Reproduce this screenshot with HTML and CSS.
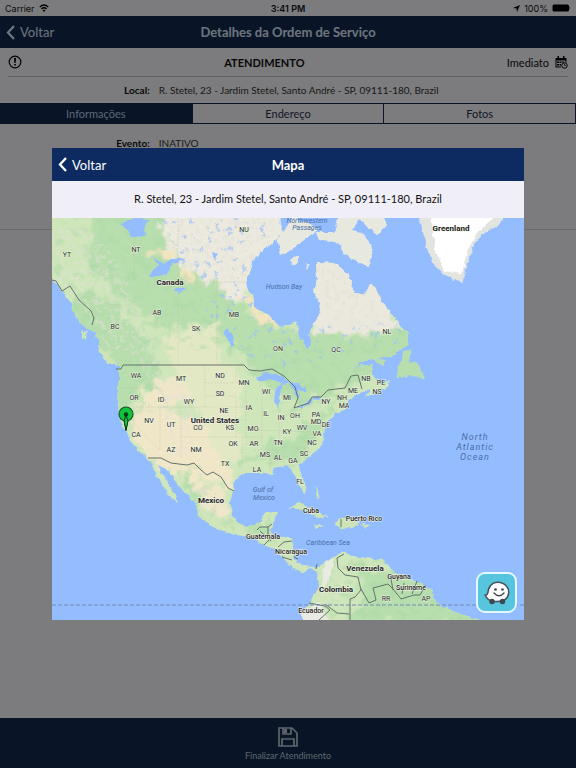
FILE: index.html
```html
<!DOCTYPE html>
<html lang="pt-BR">
<head>
<meta charset="utf-8">
<meta name="viewport" content="width=device-width, initial-scale=1">
<title>Detalhes da Ordem de Serviço</title>
<link rel="stylesheet" href="styles.css">
</head>
<body>
<div class="page">
  <div class="status">
    <span class="status-side">Carrier
      <svg width="10" height="8" viewBox="0 0 20 16" fill="none" stroke="#000" stroke-width="2.6"><path d="M1.5 6Q10-2 18.5 6M5 10Q10 5 15 10"/><path d="M7 12.500Q10 10 13 12.500L10 16Z" fill="#000" stroke="none"/></svg>
    </span>
    <span class="status-time">3:41 PM</span>
    <span class="status-side status-right">
      <svg width="7" height="7" viewBox="0 0 14 14"><path d="M14 0L8 14L7 7L0 6Z"/></svg>
      100%
      <svg width="19" height="8" viewBox="0 0 38 16"><rect x="1" y="1" width="33" height="14" rx="3"/><path d="M35 5q3 3 0 6z"/></svg>
    </span>
  </div>
  <header class="bar">
    <button class="back" type="button"><svg width="9" height="15" viewBox="0 0 9 15"><path d="M8 1L2 7.500L8 14" fill="none" stroke="currentColor" stroke-width="2.300"/></svg>Voltar</button>
    <h1>Detalhes da Ordem de Serviço</h1>
    <span></span>
  </header>
  <section class="summary">
    <div class="service">
      <svg width="14" height="14" viewBox="0 0 14 14"><circle cx="7" cy="7" r="5.800" fill="none" stroke="#000" stroke-width="1.200"/><path d="M6 3h2l-.4 5H6.400zM6.200 9h1.600v1.600H6.200z"/></svg>
      <strong>ATENDIMENTO</strong>
      <span class="when">Imediato
        <svg width="13" height="13" viewBox="0 0 26 26"><path d="M1 4h22v9h-2V9H3v12h9v2H1zM5 0h3v6H5zM16 0h3v6h-3zM4 11h4v3H4zM9 11h4v3H9zM14 11h4v2h-4zM4 16h4v3H4zM9 16h3v3H9z"/><circle cx="19" cy="19" r="5.500" fill="#f9f7fc" stroke="#000" stroke-width="2"/><path d="M19 15v4h3" fill="none" stroke="#000" stroke-width="1.500"/></svg>
      </span>
    </div>
    <dl class="field"><dt>Local:</dt><dd>R. Stetel, 23 - Jardim Stetel, Santo André - SP, 09111-180, Brazil</dd></dl>
  </section>
  <nav class="tabs">
    <button class="tab active" type="button">Informações</button>
    <button class="tab" type="button">Endereço</button>
    <button class="tab" type="button">Fotos</button>
  </nav>
  <section class="details">
    <dl class="field"><dt>Evento:</dt><dd>INATIVO</dd></dl>
  </section>
  <footer class="footer">
    <button class="finish" type="button">
      <svg width="22" height="22" viewBox="0 0 22 22" fill="none" stroke="#b9cbd8" stroke-width="1.700"><path d="M2 2H15L20 7V20H2Z"/><path d="M6 2V8H14V2M5 20V13H17V20"/><path d="M7 3h3v4H7z" fill="#b9cbd8" stroke="none"/></svg>
      Finalizar Atendimento
    </button>
  </footer>
</div>

<div class="backdrop">
  <div class="dialog" role="dialog" aria-labelledby="dialog-title">
    <header class="bar">
      <button class="back" type="button"><svg width="9" height="15" viewBox="0 0 9 15"><path d="M8 1L2 7.500L8 14" fill="none" stroke="currentColor" stroke-width="2.300"/></svg>Voltar</button>
      <h2 id="dialog-title">Mapa</h2>
      <span></span>
    </header>
    <p class="address">R. Stetel, 23 - Jardim Stetel, Santo André - SP, 09111-180, Brazil</p>
    <div class="map-area">
      <svg class="map" viewBox="52 218 472 402" role="img" aria-label="Mapa">
        <defs>
          <filter id="rough" x="-5%" y="-5%" width="110%" height="110%"><feTurbulence type="fractalNoise" baseFrequency=".16" numOctaves="3" seed="4"/><feDisplacementMap in="SourceGraphic" scale="5" xChannelSelector="R" yChannelSelector="G"/></filter>
          <filter id="ragged" x="-10%" y="-10%" width="120%" height="120%"><feTurbulence type="fractalNoise" baseFrequency=".09" numOctaves="4" seed="9"/><feDisplacementMap in="SourceGraphic" scale="22" xChannelSelector="R" yChannelSelector="G"/><feGaussianBlur stdDeviation="1.200"/></filter>
          <filter id="lakes" x="0" y="0" width="100%" height="100%"><feTurbulence type="fractalNoise" baseFrequency=".15" numOctaves="3" seed="12"/><feColorMatrix values="0 0 0 0 .32 0 0 0 0 .52 0 0 0 0 .96 14 0 0 0 -9.100"/><feComposite in2="SourceGraphic" operator="in"/></filter>
          <filter id="relief" x="0" y="0" width="100%" height="100%"><feTurbulence type="fractalNoise" baseFrequency=".2" numOctaves="4" seed="31"/><feColorMatrix values="0 0 0 0 .76 0 0 0 0 .75 0 0 0 0 .69 6 0 0 0 -3"/><feComposite in2="SourceGraphic" operator="in"/></filter>
          <filter id="forest" x="0" y="0" width="100%" height="100%"><feTurbulence type="fractalNoise" baseFrequency=".11" numOctaves="4" seed="22"/><feColorMatrix values="0 0 0 0 .38 0 0 0 0 .68 0 0 0 0 .36 0 5 0 0 -2.600"/><feComposite in2="SourceGraphic" operator="in"/></filter>
          <clipPath id="mainland"><path d="M40 205H279L282 235L265 248L252 262L245 285L252 295L254 307L265 313L282 327L297 322L299 337L307 349L311 343L309 330L319 315L321 305L314 292L317 278L316 262L334 263L349 275L354 292L364 295L372 282L384 305L401 327L409 333L407 345L391 357L364 360L351 370L361 365L372 365V376L380 384L391 380L388 387L366 397L370 388L362 392L349 400L347 408L337 413L327 423L324 433L322 445L306 460L299 466L301 473L307 490L304 493L296 480L291 468L285 466L272 468L274 474L262 473L245 473L234 480L233 490L230 503L235 520L245 527L260 523L265 512H277L272 525L270 532L279 537H292L294 557L297 562L304 566L317 567L323 563L334 557L344 552L354 557L384 560L394 572L417 582L431 590L436 603L444 608L482 621H309L304 610L309 603L319 587L317 572L311 568L304 573L293 568L282 557L274 548L259 543L252 537L235 535L212 527L199 517L195 502L180 487L167 472L157 464L162 474L174 492L179 503L170 497L159 480L149 460L134 447L127 433L120 420L117 400L119 380V365L102 350L95 333L77 320L69 300L52 280L40 270Z"/></clipPath>
        </defs>
        <rect x="52" y="218" width="472" height="402" fill="#93bdff"/>
        <g filter="url(#rough)">
          <g clip-path="url(#mainland)">
            <rect x="40" y="200" width="460" height="430" fill="#cfe6ba"/>
            <g filter="url(#ragged)">
              <path fill="#ece9de" d="M150 200H300V255L245 275L250 305L224 297L214 282L190 277L176 264L165 248L150 230Z"/>
              <path fill="#ebe8dd" d="M310 255L360 265L390 290L397 335L350 333L310 344Z"/>
              <path fill="#b8deae" d="M95 200H155L170 255L220 290L257 319L300 332L318 332L350 338L410 325L412 350L350 385L300 405L260 382L243 352L205 327L155 324L90 270Z"/>
              <path fill="#b8deae" d="M70 300L95 290L150 340L164 387L144 385L128 415H112V360L75 320Z"/>
              <path fill="#f0e7c9" d="M138 410L170 405L213 398L190 377L150 381L142 397ZM130 413L162 409L200 420L222 458L238 490L218 482L180 476L148 459L138 443ZM180 476L220 486L230 515L210 516L195 494Z"/>
              <path fill="#e2e8c4" d="M162 340L190 325H215L220 362L240 367V460L215 455L195 400L170 362Z"/>
              <path fill="#f3e4c0" d="M147 248L170 252L177 260L165 263ZM184 265L192 270L190 280L183 277ZM238 293L253 297L257 308L285 322H262Z"/>
              <path fill="#b8deae" d="M237 462L300 462L320 430L350 391L325 410L292 440L268 440L262 455ZM180 465L199 490L199 515L193 500ZM202 514L240 528L273 544L275 515L262 525L250 529L227 520ZM350 558L440 590L490 622H350L365 594Z"/>
            </g>
            <g filter="url(#forest)" opacity=".38"><path fill="#fff" d="M50 215H165L185 275L225 300L240 345L300 335L410 330L400 370L340 395L280 420L245 365L210 350H110L50 300ZM125 360H160L165 410L125 415ZM240 450L320 430L300 470ZM330 560H400L480 625H320ZM175 465H200L240 535H200Z"/></g>
            <g opacity=".5">
              <path filter="url(#relief)" fill="#fff" d="M50 228L90 230L120 265L142 320L164 372L200 405L190 455L170 455L158 390L130 350L110 350L75 300L50 280ZM314 264L350 274L393 325L330 330ZM190 480L222 500L230 525L205 518ZM325 570L345 560L345 590L318 615ZM165 215H285L245 285L190 270Z"/>
            </g>
            <g filter="url(#lakes)" opacity=".6"><path fill="#fff" d="M160 215H285V250L245 280L255 310L285 330L400 320V345L350 350L290 370L240 355L205 310Z"/></g>
            <g fill="#93bdff"><path d="M119 224L135 218L150 219L143 230L147 234L132 238L128 230ZM149 276L158 264L151 257L163 263L177 258L186 259L174 263L166 274L155 277ZM224 331L229 329L235 344L232 348ZM256 378L264 373L278 374L290 382L285 385L271 379L258 382ZM274 401L276 387L283 383L280 395L278 408ZM288 383L297 382L306 388L305 392L299 389L298 401L294 391ZM296 409L310 400L313 402L300 409ZM309 399L322 396L319 400ZM173 290L186 287L179 294ZM213 251L218 255L215 260Z"/></g>
          </g>
          <path fill="#e7e9df" d="M292 218L308 223L319 229L303 241L292 250L281 255L277 239L284 231ZM340 213H382L386 225L378 236L367 227L360 219L352 230L362 232L371 243L373 258L367 267L355 260L343 254L340 244L318 240L316 232L334 232ZM290 260L298 256V262L292 265ZM305 263L310 265L308 269Z"/>
          <path fill="#e2e5df" d="M418 213H508L498 226L486 232L475 242L469 259L465 271L463 282L455 280L444 275L433 264L427 246Z"/>
          <path fill="#fff" d="M431 213H499L485 225L475 237L467 251L462 274L444 271L435 250Z"/>
          <path fill="#b8deae" d="M396 374L404 352L411 348L409 361L420 365L425 379L413 376L397 377ZM373 358L386 360L382 365Z"/>
          <path fill="#cde5b6" d="M288 508L300 503L315 511L330 517L318 518L304 510ZM334 524L342 517L360 524L344 529ZM314 524L323 526L316 529ZM361 524L370 525L366 528ZM315 485L320 498L317 499ZM82 330L87 331L86 340L82 338ZM97 344L112 358L118 366L108 363L99 352Z"/>
          <path fill="#e8ebe2" d="M300 612L318 603L330 622H305ZM324 563L334 558L330 578L322 590Z"/>
          <path fill="#93bdff" d="M160 465L170 474L181 490L192 500L177 491L164 476Z"/>
        </g>
        <g fill="none" stroke="#b6b9a2" stroke-width=".5" stroke-dasharray="2 1" opacity=".6"><path d="M107 305H140M134 218V280M178 218V364M217 280V364M167 282H244M121 388H160L169 408M136 407H205V365M134 407V424L160 450V407M181 407V458M181 437H236V396H205M205 383H236V364M205 407H245M205 420H246M236 437H262M246 390V437M262 390V450M279 408V440M242 437V470M254 450H280M270 453V470M284 437V467M255 430L310 432M302 407V425M292 448H310"/></g>
        <g fill="none" stroke="#65736d" stroke-width="1" stroke-linejoin="round"><path d="M52 280L56 281L62 291L70 286L79 300L91 311L94 318L92 325M116 369L121 369L123 365H244L249 370L260 371L272 369L284 376L295 387L298 398L294 408L309 403L312 397L321 397L328 390L345 388L351 376L358 375L362 389M148 458H161L171 463L187 465L194 463L201 470L207 475L213 472L221 477L228 488L234 491M257 530L260 527H268L272 524M268 527V535M260 531L271 541M264 545L269 540M278 547L284 542L292 541M282 557L292 560M316 569L317 564M344 554L337 558L338 568L345 575L358 577L361 590L355 597L350 599V620M361 589L369 603L376 600L373 588L388 584L393 589L401 599L414 595L420 595L426 585M309 603L325 606L330 610L319 620M325 604L337 613L349 614M391 579L393 590M404 583L402 594M417 581L412 594M341 519V527M294 557L298 559"/></g>
        <path d="M52 605H524" stroke="#7589b5" stroke-width="1" stroke-dasharray="4 2" fill="none"/>
        <g class="region">
          <text x="244" y="232">NU</text><text x="136" y="252">NT</text><text x="67" y="257">YT</text><text x="157" y="315">AB</text><text x="234" y="317">MB</text><text x="115" y="329">BC</text><text x="196" y="331">SK</text><text x="278" y="351">ON</text><text x="336" y="352">QC</text><text x="387" y="334">NL</text>
          <text x="136" y="378">WA</text><text x="181" y="381">MT</text><text x="220" y="378">ND</text><text x="244" y="385">MN</text><text x="134" y="400">OR</text><text x="161" y="402">ID</text><text x="189" y="404">WY</text><text x="220" y="396">SD</text><text x="266" y="394">WI</text><text x="287" y="400">MI</text><text x="366" y="381">NB</text><text x="381" y="385">PE</text><text x="377" y="394">NS</text><text x="353" y="393">ME</text><text x="342" y="400">NH</text><text x="326" y="404">NY</text><text x="344" y="408">MA</text>
          <text x="149" y="423">NV</text><text x="171" y="427">UT</text><text x="224" y="413">NE</text><text x="249" y="410">IA</text><text x="266" y="416">IL</text><text x="281" y="420">IN</text><text x="295" y="418">OH</text><text x="316" y="417">PA</text><text x="316" y="424">MD</text><text x="326" y="427">DE</text><text x="302" y="430">WV</text><text x="317" y="436">VA</text><text x="136" y="437">CA</text><text x="198" y="430">CO</text><text x="230" y="430">KS</text><text x="253" y="431">MO</text><text x="287" y="434">KY</text><text x="312" y="445">NC</text><text x="278" y="445">TN</text><text x="254" y="446">AR</text><text x="233" y="446">OK</text><text x="171" y="452">AZ</text><text x="196" y="452">NM</text><text x="304" y="456">SC</text><text x="265" y="457">MS</text><text x="278" y="460">AL</text><text x="293" y="463">GA</text><text x="225" y="466">TX</text><text x="257" y="472">LA</text><text x="300" y="484">FL</text><text x="386" y="601">RR</text><text x="426" y="601">AP</text>
        </g>
        <g class="country"><text x="170" y="285">Canada</text><text x="215" y="423">United States</text><text x="211" y="503">Mexico</text><text x="451" y="231">Greenland</text><text x="365" y="571">Venezuela</text><text x="336" y="592">Colombia</text></g>
        <g class="country small"><text x="311" y="513">Cuba</text><text x="364" y="521">Puerto Rico</text><text x="263" y="539">Guatemala</text><text x="291" y="554">Nicaragua</text><text x="399" y="579">Guyana</text><text x="411" y="590">Suriname</text><text x="311" y="613">Ecuador</text></g>
        <g class="water"><text x="307" y="223">Northwestern</text><text x="307" y="230">Passages</text><text x="284" y="289">Hudson Bay</text><text x="263" y="492">Gulf of</text><text x="264" y="500">Mexico</text><text x="328" y="545">Caribbean Sea</text></g>
        <g class="water ocean"><text x="475" y="440">North</text><text x="475" y="450">Atlantic</text><text x="475" y="460">Ocean</text></g>
        <path d="M126 431L124.500 421Q119 419 119 414A7 7 0 0 1 133 414Q133 419 127.500 421Z" fill="#12c43b" stroke="#174d25" stroke-width="1.100"/>
        <path d="M126 430L124 421L126 415L128 421Z" fill="#12c43b" stroke="#073b15" stroke-width="1"/><circle cx="126" cy="414.500" r="2.200" fill="#073b15"/>
      </svg>
      <button class="waze" type="button" aria-label="Waze">
        <svg width="26" height="24" viewBox="0 0 52 48"><path d="M2 28C8 29 8 22 9 17C12 5 23 1 33 3C45 6 51 16 49 26C47 36 38 41 27 41H17C10 39 5 34 2 28Z" fill="#fff" stroke="#45515b" stroke-width="3" stroke-linejoin="round"/><circle cx="16" cy="41" r="5.500" fill="#3e4951"/><circle cx="37" cy="41" r="5.500" fill="#3e4951"/><circle cx="23" cy="17" r="2.700" fill="#3e4951"/><circle cx="37" cy="17" r="2.700" fill="#3e4951"/><path d="M20 24Q30 35 40 24" fill="none" stroke="#3e4951" stroke-width="2.800" stroke-linecap="round"/></svg>
      </button>
    </div>
  </div>
</div>
</body>
</html>
```
FILE: styles.css
```css
* { box-sizing: border-box; }
body { margin: 0; font-family: Lato, "Liberation Sans", sans-serif; color: #111; }
button { font: inherit; color: inherit; background: none; border: 0; padding: 0; }
h1, h2, p, dl, dd { margin: 0; }
svg { display: block; }

.page { min-height: 100vh; display: flex; flex-direction: column; background: #f9f7fc; }

.status { display: grid; grid-template-columns: 1fr auto 1fr; align-items: center; height: 16px; padding: 0 5px; font-family: Inter, "Liberation Sans", sans-serif; font-size: 9px; }
.status-side { display: flex; align-items: center; gap: 4px; }
.status-right { justify-content: flex-end; }
.status-time { font-weight: 600; }

.bar { display: grid; grid-template-columns: 1fr auto 1fr; align-items: center; height: 32px; padding: 0 6px; background: #0e2b61; color: #fff; }
.bar h1, .bar h2 { font-size: 13px; font-weight: 700; }
.back { display: flex; align-items: center; gap: 5px; font-size: 13px; }
.page .bar { background: #14294f; color: #dce8f8; }

.service { display: flex; justify-content: space-between; align-items: center; height: 29px; margin: 0 8px; border-bottom: 1px solid #c4c2c8; font-size: 11px; }
.when { display: flex; align-items: center; gap: 6px; }
.field { display: grid; grid-template-columns: 26% 1fr; column-gap: 9px; align-items: center; height: 26px; font-size: 10px; }
.field dt { text-align: right; font-weight: 700; }
.field dd { color: #333; }

.tabs { display: grid; grid-template-columns: repeat(3, 1fr); height: 21px; border: 1px solid #14294f; border-left: 0; }
.tab { font-size: 11px; color: #26334b; border-left: 1px solid #14294f; }
.tab.active { background: #14294f; color: #b9cbe4; border-left: 0; }

.details { height: 106px; padding-top: 6px; border-bottom: 1px solid #d2d0d6; }

.footer { display: flex; justify-content: center; height: 50px; margin-top: auto; background: #14294f; }
.finish { display: flex; flex-direction: column; align-items: center; justify-content: center; gap: 2px; color: #b9c8d9; font-size: 9px; }

.backdrop { position: fixed; inset: 0; display: flex; align-items: center; justify-content: center; padding: 0 52px; background: rgba(0, 0, 0, .5); }
.dialog { width: 100%; background: #f0eef6; }
.dialog .bar { height: 33px; }
.address { padding: 10px 8px 11px; font-size: 11px; line-height: 16px; text-align: center; }

.map-area { position: relative; }
.map { width: 100%; height: auto; font-family: Roboto, "Liberation Sans", sans-serif; text-anchor: middle; }
.region { font-size: 7px; fill: #252b25; stroke: #eef3e4; stroke-width: 1px; paint-order: stroke; }
.country { font-size: 8px; font-weight: 700; fill: #222; stroke: #f4f5ea; stroke-width: 1px; paint-order: stroke; }
.small { font-size: 7px; font-weight: 500; }
.water { font-size: 7px; font-style: italic; fill: #4a6fa8; }
.ocean { font-size: 9px; letter-spacing: 1px; }

.waze { position: absolute; right: 7px; bottom: 7px; display: grid; place-items: center; width: 41px; height: 41px; border: 2px solid #e4f8ff; border-radius: 9px; background: #58c5de; }
```
